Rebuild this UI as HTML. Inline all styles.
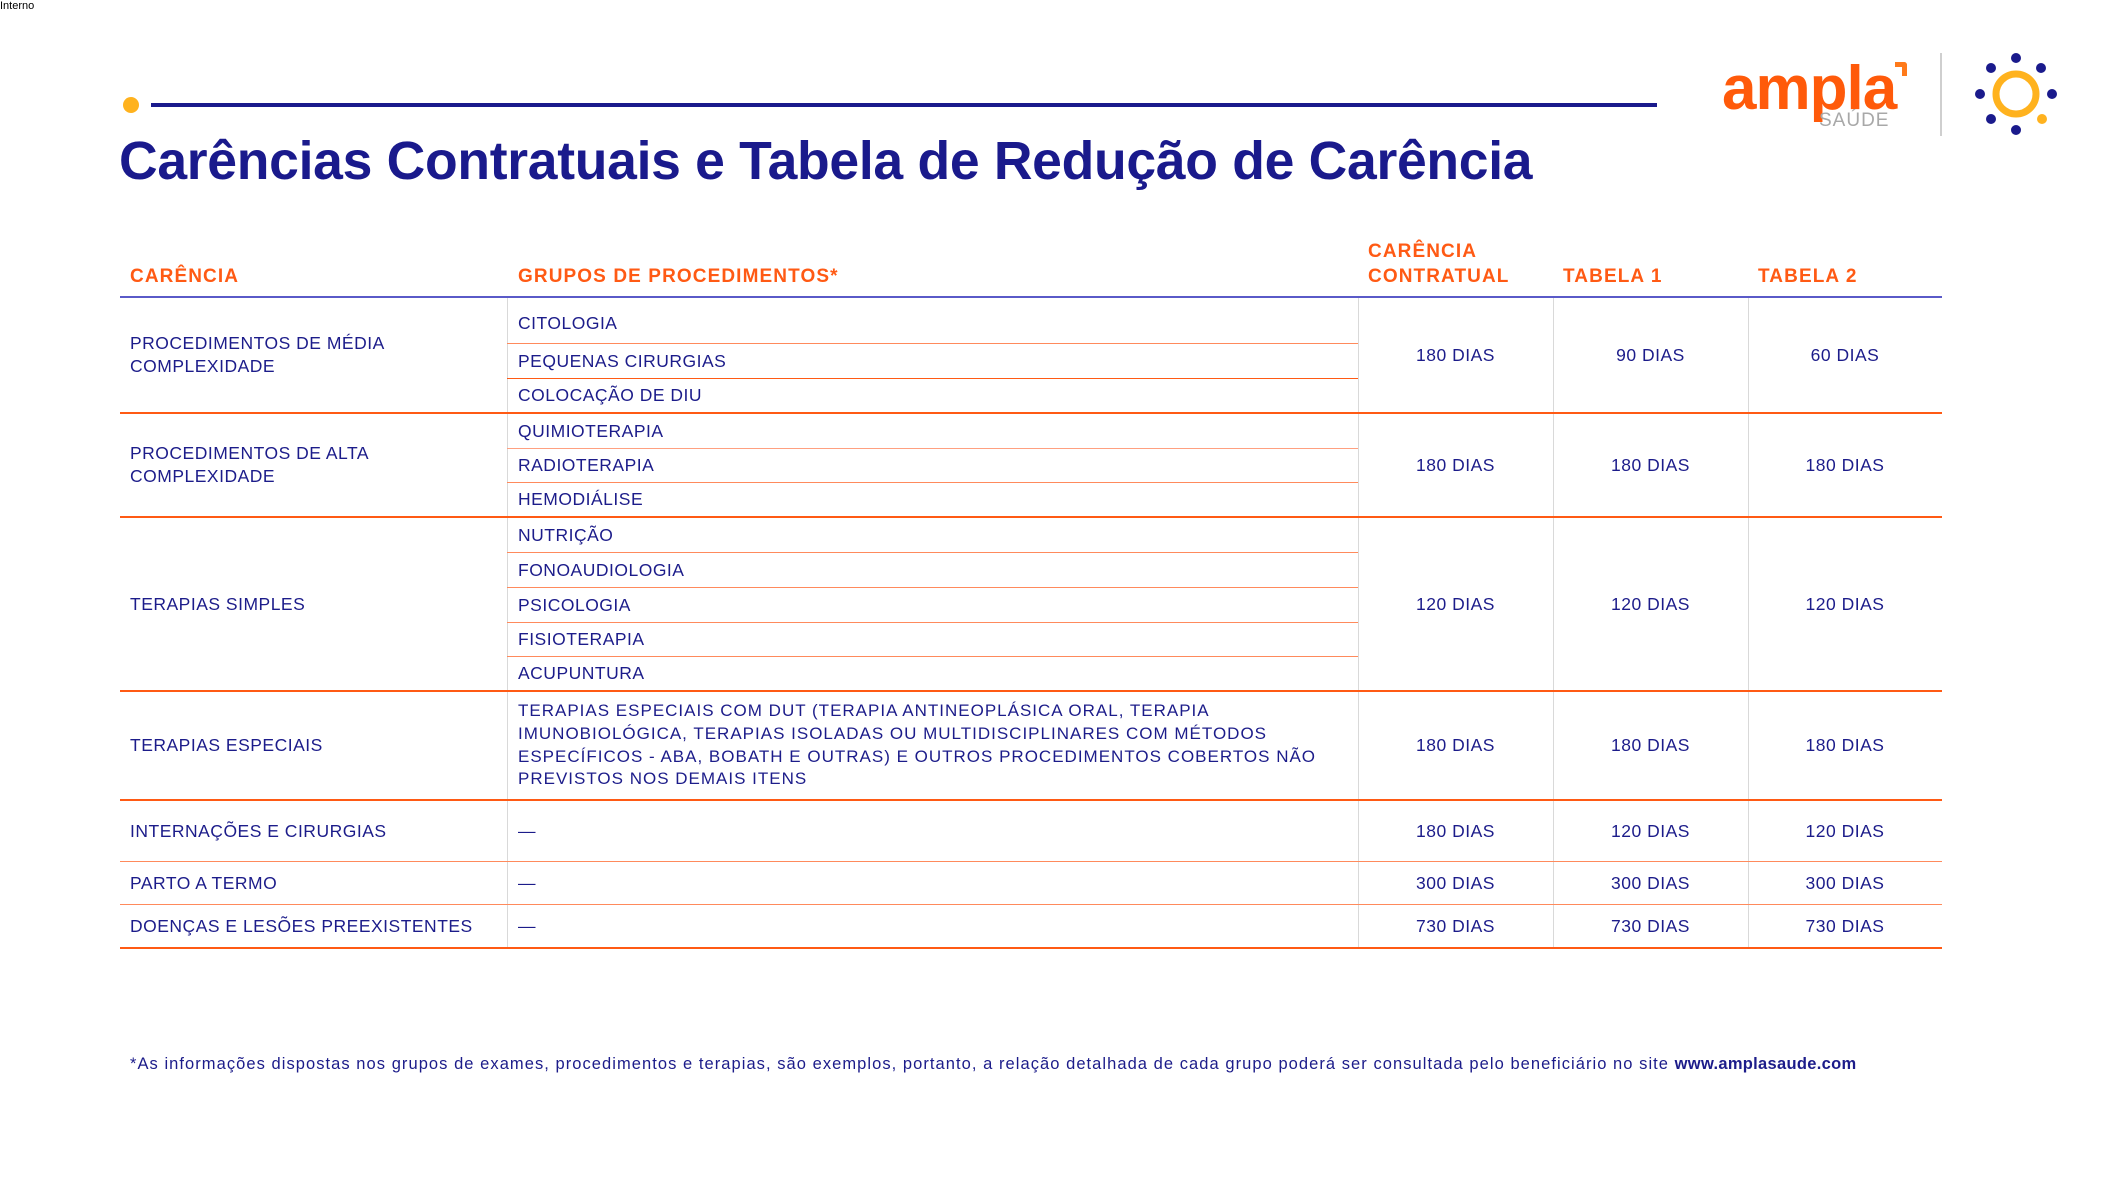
<!DOCTYPE html>
<html><head><meta charset="utf-8"><style>
*{margin:0;padding:0;box-sizing:border-box}
body{width:2111px;height:1187px;background:#fff;position:relative;overflow:hidden;font-family:"Liberation Sans",sans-serif;color:#1c1c8a}
.a{position:absolute}
.t{position:absolute;font-size:17.5px;white-space:nowrap;display:flex;align-items:center;line-height:23px;letter-spacing:0.5px}
.c{justify-content:center}
.h{position:absolute;font-size:19px;font-weight:bold;color:#ff5a14;white-space:nowrap;line-height:25px;letter-spacing:1.1px}
.hl{position:absolute;left:120px;width:1822px;height:2px;background:#ff5a14}
.sl{position:absolute;left:507px;width:851px;height:1px;background:#ff8a5c}
.vl{position:absolute;width:1px;background:#d9d9d9}
</style></head><body>
<div class="a" style="left:0;top:0;font-size:11px;color:#000">Interno</div>
<div class="a" style="left:123px;top:97px;width:16px;height:16px;border-radius:50%;background:#ffb21e"></div>
<div class="a" style="left:151px;top:103px;width:1506px;height:4px;background:#1a1a8c"></div>
<div class="a" style="left:119px;top:131px;font-size:53.5px;font-weight:bold;color:#1a1a8c;white-space:nowrap;letter-spacing:-0.3px">Carências Contratuais e Tabela de Redução de Carência</div>

<!-- logo -->
<div class="a" style="left:1722px;top:54px;font-size:62px;font-weight:bold;color:#ff5a0a;letter-spacing:-1px;line-height:70px">ampla</div>
<div class="a" style="left:1895px;top:62px;width:12px;height:14px;border-top:5px solid #ff7a1a;border-right:5px solid #ff7a1a;border-radius:0 3px 0 0"></div>
<div class="a" style="left:1819px;top:110px;font-size:19px;color:#a8a8a8;letter-spacing:1px">SAÚDE</div>
<div class="a" style="left:1940px;top:53px;width:2px;height:83px;background:#cfcfcf"></div>
<svg class="a" style="left:1970px;top:48px" width="92" height="92" viewBox="1970 48 92 92">
<circle cx="2016" cy="94" r="20" fill="none" stroke="#ffb21e" stroke-width="7"/>
<g fill="#1a1a8c"><circle cx="2016" cy="58" r="5"/><circle cx="2041" cy="68" r="5"/><circle cx="2052" cy="94" r="5"/><circle cx="2016" cy="130" r="5"/><circle cx="1991" cy="119" r="5"/><circle cx="1980" cy="94" r="5"/><circle cx="1991" cy="68" r="5"/></g>
<circle cx="2042" cy="119" r="5" fill="#ffb21e"/>
</svg>

<!-- headers -->
<div class="h" style="left:130px;top:264px">CARÊNCIA</div>
<div class="h" style="left:518px;top:264px">GRUPOS DE PROCEDIMENTOS*</div>
<div class="h" style="left:1368px;top:239px">CARÊNCIA<br>CONTRATUAL</div>
<div class="h" style="left:1563px;top:264px">TABELA 1</div>
<div class="h" style="left:1758px;top:264px">TABELA 2</div>
<div class="a" style="left:120px;top:296px;width:1822px;height:2px;background:#5a5ac8"></div>

<!-- vertical lines -->
<div class="vl" style="left:507px;top:298px;height:650px"></div>
<div class="vl" style="left:1358px;top:298px;height:650px"></div>
<div class="vl" style="left:1553px;top:298px;height:650px"></div>
<div class="vl" style="left:1748px;top:298px;height:650px"></div>

<!-- horizontal lines -->
<div class="sl" style="top:343px"></div><div class="sl" style="top:378px;background:#ff5a14"></div>
<div class="hl" style="top:412px"></div>
<div class="sl" style="top:448px;background:#ffa080"></div><div class="sl" style="top:482px"></div>
<div class="hl" style="top:516px"></div>
<div class="sl" style="top:552px"></div><div class="sl" style="top:587px"></div><div class="sl" style="top:622px"></div><div class="sl" style="top:656px"></div>
<div class="hl" style="top:690px"></div>
<div class="hl" style="top:799px"></div>
<div class="hl" style="top:861px;height:1px;background:#ff8a5c"></div>
<div class="hl" style="top:904px;height:1px;background:#ff8a5c"></div>
<div class="hl" style="top:947px"></div>

<!-- group 1 -->
<div class="t" style="left:130px;top:298px;height:114px">PROCEDIMENTOS DE MÉDIA<br>COMPLEXIDADE</div>
<div class="t" style="left:518px;top:308px;height:30px">CITOLOGIA</div>
<div class="t" style="left:518px;top:344px;height:34px">PEQUENAS CIRURGIAS</div>
<div class="t" style="left:518px;top:379px;height:33px">COLOCAÇÃO DE DIU</div>
<div class="t c" style="left:1358px;width:195px;top:298px;height:114px">180 DIAS</div>
<div class="t c" style="left:1553px;width:195px;top:298px;height:114px">90 DIAS</div>
<div class="t c" style="left:1748px;width:194px;top:298px;height:114px">60 DIAS</div>
<!-- group 2 -->
<div class="t" style="left:130px;top:414px;height:102px">PROCEDIMENTOS DE ALTA<br>COMPLEXIDADE</div>
<div class="t" style="left:518px;top:414px;height:34px">QUIMIOTERAPIA</div>
<div class="t" style="left:518px;top:449px;height:33px">RADIOTERAPIA</div>
<div class="t" style="left:518px;top:483px;height:33px">HEMODIÁLISE</div>
<div class="t c" style="left:1358px;width:195px;top:414px;height:102px">180 DIAS</div>
<div class="t c" style="left:1553px;width:195px;top:414px;height:102px">180 DIAS</div>
<div class="t c" style="left:1748px;width:194px;top:414px;height:102px">180 DIAS</div>
<!-- group 3 -->
<div class="t" style="left:130px;top:518px;height:172px">TERAPIAS SIMPLES</div>
<div class="t" style="left:518px;top:518px;height:34px">NUTRIÇÃO</div>
<div class="t" style="left:518px;top:553px;height:34px">FONOAUDIOLOGIA</div>
<div class="t" style="left:518px;top:588px;height:34px">PSICOLOGIA</div>
<div class="t" style="left:518px;top:623px;height:33px">FISIOTERAPIA</div>
<div class="t" style="left:518px;top:657px;height:33px">ACUPUNTURA</div>
<div class="t c" style="left:1358px;width:195px;top:518px;height:172px">120 DIAS</div>
<div class="t c" style="left:1553px;width:195px;top:518px;height:172px">120 DIAS</div>
<div class="t c" style="left:1748px;width:194px;top:518px;height:172px">120 DIAS</div>
<!-- group 4 -->
<div class="t" style="left:130px;top:692px;height:107px">TERAPIAS ESPECIAIS</div>
<div class="t" style="left:518px;top:692px;height:107px;font-size:17px;line-height:22.6px;letter-spacing:1px">TERAPIAS ESPECIAIS COM DUT (TERAPIA ANTINEOPLÁSICA ORAL, TERAPIA<br>IMUNOBIOLÓGICA, TERAPIAS ISOLADAS OU MULTIDISCIPLINARES COM MÉTODOS<br>ESPECÍFICOS - ABA, BOBATH E OUTRAS) E OUTROS PROCEDIMENTOS COBERTOS NÃO<br>PREVISTOS NOS DEMAIS ITENS</div>
<div class="t c" style="left:1358px;width:195px;top:692px;height:107px">180 DIAS</div>
<div class="t c" style="left:1553px;width:195px;top:692px;height:107px">180 DIAS</div>
<div class="t c" style="left:1748px;width:194px;top:692px;height:107px">180 DIAS</div>
<!-- group 5 -->
<div class="t" style="left:130px;top:801px;height:60px">INTERNAÇÕES E CIRURGIAS</div>
<div class="t" style="left:518px;top:801px;height:60px">—</div>
<div class="t c" style="left:1358px;width:195px;top:801px;height:60px">180 DIAS</div>
<div class="t c" style="left:1553px;width:195px;top:801px;height:60px">120 DIAS</div>
<div class="t c" style="left:1748px;width:194px;top:801px;height:60px">120 DIAS</div>
<!-- group 6 -->
<div class="t" style="left:130px;top:862px;height:42px">PARTO A TERMO</div>
<div class="t" style="left:518px;top:862px;height:42px">—</div>
<div class="t c" style="left:1358px;width:195px;top:862px;height:42px">300 DIAS</div>
<div class="t c" style="left:1553px;width:195px;top:862px;height:42px">300 DIAS</div>
<div class="t c" style="left:1748px;width:194px;top:862px;height:42px">300 DIAS</div>
<!-- group 7 -->
<div class="t" style="left:130px;top:905px;height:42px">DOENÇAS E LESÕES PREEXISTENTES</div>
<div class="t" style="left:518px;top:905px;height:42px">—</div>
<div class="t c" style="left:1358px;width:195px;top:905px;height:42px">730 DIAS</div>
<div class="t c" style="left:1553px;width:195px;top:905px;height:42px">730 DIAS</div>
<div class="t c" style="left:1748px;width:194px;top:905px;height:42px">730 DIAS</div>

<div class="a" style="left:130px;top:1055px;font-size:16.5px;white-space:nowrap;color:#1c1c8a;letter-spacing:1.05px">*As informações dispostas nos grupos de exames, procedimentos e terapias, são exemplos, portanto, a relação detalhada de cada grupo poderá ser consultada pelo beneficiário no site <b style="letter-spacing:0.3px">www.amplasaude.com</b></div>
</body></html>
